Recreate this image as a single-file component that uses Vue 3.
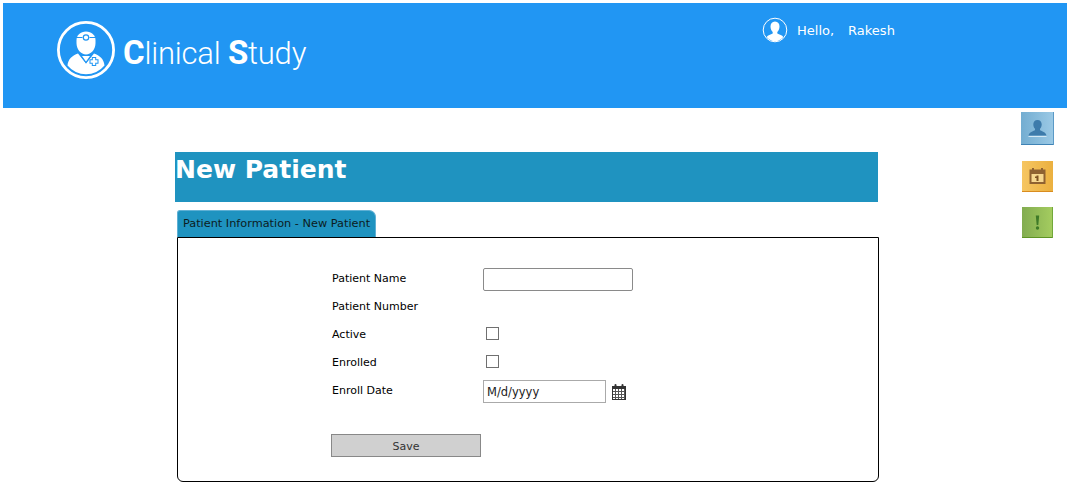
<template>
  <div class="page">
    <header class="topbar">
      <div class="brand">
        <svg class="logo" viewBox="0 0 60 60" width="60" height="60" aria-hidden="true">
          <circle cx="30" cy="30" r="27.600" fill="none" stroke="#fff" stroke-width="2.800" />
          <path fill="#fff" d="M20.500 20c0-4.500 4-8.500 9.500-8.500s9.500 4 9.500 8.500v3c0 6.500-4.500 11.500-9.500 11.500s-9.500-5-9.500-11.500z" />
          <path fill="none" stroke="#2196f3" stroke-width="1.100" d="M20 17.500h6.500M33.500 17.500h6.500" />
          <circle cx="30" cy="17.500" r="2.700" fill="#fff" stroke="#2196f3" stroke-width="1.200" />
          <path fill="#fff" d="M22 33.500c-5.500 2-10 5.500-10.500 12A24 24 0 0 0 48.500 45.500c-.5-6.500-5-10-10.500-12l-8 10z" />
          <path fill="#fff" stroke="#2196f3" stroke-width="1.200" d="M25 35.500h10l-5 7z" />
          <path fill="none" stroke="#2196f3" stroke-width="4.400" d="M33.500 41.500h9M38 37v9" />
          <path fill="none" stroke="#fff" stroke-width="2.400" d="M34.500 41.500h7M38 38v7" />
        </svg>
        <div class="brand-name"><b>C</b>linical <b>S</b>tudy</div>
      </div>
      <div class="user">
        <svg viewBox="0 0 26 26" width="26" height="26" aria-hidden="true">
          <circle cx="13" cy="13" r="11.800" fill="none" stroke="#fff" stroke-width="1" />
          <path fill="#fff" d="M13 4.500c3 0 4.500 2.200 4.500 5 0 2.400-1 4.400-2.200 5.500v1.500c2 1 5 1.500 6 3.500-2 2.600-5 4.300-8.300 4.300s-6.300-1.700-8.300-4.300c1-2 4-2.500 6-3.500V15c-1.200-1.100-2.200-3.100-2.200-5.500 0-2.800 1.500-5 4.500-5z" />
        </svg>
        <span class="hello">Hello,</span>
        <span>Rakesh</span>
      </div>
    </header>

    <div class="body">
      <main class="content">
        <h1 class="title">New Patient</h1>
        <div class="tab">Patient Information - New Patient</div>
        <section class="panel">
          <form class="form" @submit.prevent>
            <label>Patient Name</label>
            <input class="text" type="text" />
            <label>Patient Number</label>
            <span></span>
            <label>Active</label>
            <span class="check"></span>
            <label>Enrolled</label>
            <span class="check"></span>
            <label>Enroll Date</label>
            <div class="date-cell">
              <div class="date">M/d/yyyy</div>
              <svg viewBox="0 0 14 16" width="14" height="16" aria-hidden="true">
                <path fill="#333" d="M0 2h2.500V1a1 1 0 0 1 2 0v1h5V1a1 1 0 0 1 2 0v1H14v14H0z" />
                <path fill="#fff" d="M1 5h12v10H1z" />
                <path stroke="#555" stroke-width="1" fill="none" d="M1 7.500h12M1 10.500h12M1 13.500h12M3.500 5v10M6.500 5v10M9.500 5v10M12.500 5v10" />
              </svg>
            </div>
            <button class="save" type="submit">Save</button>
          </form>
        </section>
      </main>

      <aside class="rail">
        <div class="tile blue">
          <svg viewBox="0 0 33 33" width="33" height="33" aria-hidden="true">
            <path fill="#d3e8f4" d="M7.500 24h18v1h-18z" />
            <path fill="#3d7bab" d="M16.500 8c2.700 0 4.200 2 4.200 4.300 0 2-.8 3.500-1.700 4.500v1.500c2 1 5.600 1.800 6.500 5.200H7.500c.9-3.400 4.500-4.200 6.500-5.200v-1.500c-.9-1-1.700-2.500-1.700-4.500 0-2.300 1.500-4.300 4.200-4.300z" />
          </svg>
        </div>
        <div class="tile orange">
          <svg viewBox="0 0 31 31" width="31" height="31" aria-hidden="true">
            <path fill="#8f6231" d="M7.500 8.500h2.500V7h2v1.500h7V7h2v1.500h2.500v14.500h-16z" />
            <path fill="#f6d78f" d="M9.500 13h12v8h-12z" />
            <path fill="#7d5223" d="M14.500 14.500h2v5.500h-2zM13 15.500h2v1.500h-2z" />
          </svg>
        </div>
        <div class="tile green">
          <svg viewBox="0 0 31 31" width="31" height="31" aria-hidden="true">
            <path fill="#3f7a28" d="M13.800 8.500h3.400l-.9 9.500h-1.600z" />
            <circle cx="15.500" cy="21" r="1.700" fill="#3f7a28" />
          </svg>
        </div>
      </aside>
    </div>
  </div>
</template>

<script setup>
</script>

<style>
html, body { margin: 0; background: #fff; }
</style>

<style scoped>
.page {
  padding: 3px 9px 0 3px;
  height: 484px;
  overflow: hidden;
  font-family: "DejaVu Sans", Verdana, sans-serif;
  color: #000;
}
.topbar {
  height: 105px;
  background: #2196f3;
  display: flex;
  color: #fff;
}
.brand {
  display: flex;
  align-items: center;
  gap: 7px;
  margin: 17px 0 0 53px;
  height: 60px;
  width: 700px;
}
.brand-name {
  font-family: Roboto, sans-serif;
  font-weight: 300;
  font-size: 31px;
  line-height: 60px;
  padding-top: 6px;
  letter-spacing: -0.2px;
}
.brand-name b { font-weight: 700; font-size: 33px; }
.user {
  display: flex;
  align-items: center;
  gap: 8px;
  height: 26px;
  margin: 14px 0 0 6px;
  font-size: 13px;
}
.user svg { margin-right: 1px; }
.hello { margin-right: 6px; }
.body { display: flex; }
.content {
  width: 703px;
  margin: 44px 0 0 172px;
}
.title {
  margin: 0;
  height: 50px;
  background: #1f93c0;
  color: #fff;
  font-size: 25px;
  font-weight: 700;
  line-height: 36px;
}
.tab {
  width: 199px;
  height: 27px;
  margin: 8px 0 0 2px;
  box-sizing: border-box;
  background: #1f93c0;
  border-top: 1px solid #5fb0d4;
  border-right: 1px solid #5fb0d4;
  border-left: 1px solid #5fb0d4;
  border-radius: 3px 7px 0 0;
  color: #0c1c22;
  font-size: 11.3px;
  line-height: 25px;
  text-align: center;
  white-space: nowrap;
}
.panel {
  box-sizing: border-box;
  width: 702px;
  height: 245px;
  margin-left: 2px;
  border: 1px solid #000;
  border-radius: 0 0 6px 6px;
  padding: 26px 0 0 153px;
}
.form {
  display: grid;
  grid-template-columns: 152px 160px;
  grid-auto-rows: 28px;
  align-items: center;
  font-size: 11px;
}
.form label { padding-left: 1px; }
.text {
  box-sizing: border-box;
  width: 150px;
  height: 23px;
  margin: 3px 0 0;
  padding: 0;
  background: #fff;
  border: 1px solid #8a8a8a;
  border-radius: 2px;
}
.check {
  box-sizing: border-box;
  display: block;
  width: 13px;
  height: 13px;
  margin: 0 0 1px 3px;
  border: 1px solid #707070;
  background: #fff;
}
.date-cell { display: flex; align-items: center; gap: 6px; margin-top: 3px; }
.date {
  box-sizing: border-box;
  width: 123px;
  height: 23px;
  padding-left: 3px;
  border: 1px solid #aaa;
  color: #222;
  font-size: 11.5px;
  line-height: 22px;
}
.save {
  grid-column: 1;
  align-self: start;
  width: 150px;
  height: 23px;
  margin-top: 30px;
  padding: 2px 0 0;
  background: #d0d0d0;
  border: 1px solid #888;
  color: #333;
  font-family: inherit;
  font-size: 11px;
}
.rail {
  margin-left: auto;
  margin-right: 13px;
  display: flex;
  flex-direction: column;
  align-items: center;
  width: 33px;
  padding-top: 4px;
  gap: 15px;
}
.tile { box-sizing: border-box; display: block; }
.tile svg { display: block; }
.blue {
  width: 33px;
  height: 33px;
  margin-bottom: 1px;
  background: linear-gradient(90deg, #73add1, #9ccae6);
  box-shadow: inset -1px 0 0 #5b9ac6, inset 0 -1px 0 #3f83b5;
}
.orange {
  width: 31px;
  height: 31px;
  background: linear-gradient(90deg, #f6c662, #ebb03f);
  box-shadow: inset 0 -1px 0 #d98c1f;
}
.green {
  width: 31px;
  height: 31px;
  background: linear-gradient(90deg, #82ac50, #a5cd60);
  box-shadow: inset -1px 0 0 #72a83a, inset 0 -1px 0 #5e9424;
}
</style>
